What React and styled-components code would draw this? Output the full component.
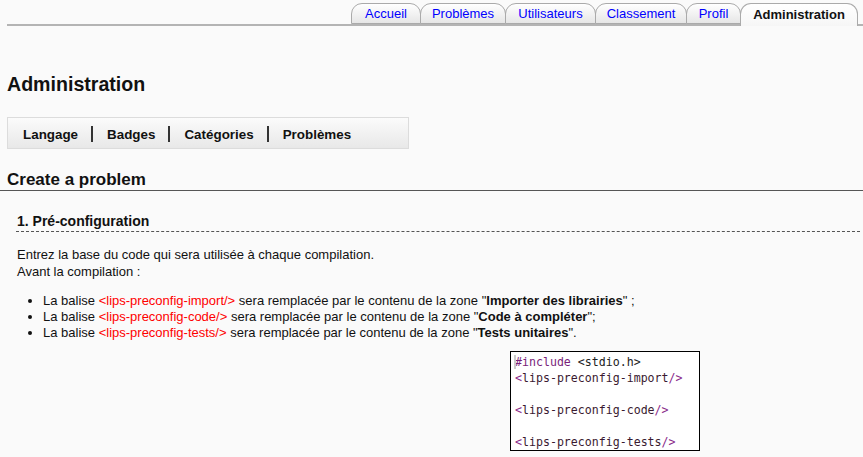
import React from "react";
import styled, { createGlobalStyle } from "styled-components";

const Global = createGlobalStyle`
  html, body { margin: 0; padding: 0; background: #fafafa; }
  body { font-family: "Liberation Sans", Arial, sans-serif; font-size: 13px; color: #111; }
`;

const Page = styled.div`
  width: 863px;
  min-height: 457px;
  box-sizing: border-box;
`;

const TabBar = styled.div`
  display: flex;
  justify-content: flex-end;
  align-items: flex-end;
  margin-left: 7px;
  padding-top: 3px;
  padding-right: 5px;
  border-bottom: 2px solid #b4b4b4;
  height: 21px;
`;

const Tab = styled.a`
  display: flex;
  align-items: center;
  justify-content: center;
  box-sizing: border-box;
  height: ${(p) => (p.$active ? "23px" : "21px")};
  margin-bottom: ${(p) => (p.$active ? "-2px" : "0")};
  padding-bottom: ${(p) => (p.$active ? "2px" : "0")};
  width: ${(p) => p.$w}px;
  border: 1px solid #aaa;
  border-bottom: ${(p) => (p.$active ? "none" : "1px solid #aaa")};
  border-radius: 11px 11px 0 0;
  background: ${(p) =>
    p.$active
      ? "linear-gradient(#ffffff, #f6f6f6)"
      : "linear-gradient(#ffffff, #e6e6e6)"};
  color: ${(p) => (p.$active ? "#111" : "#0000ff")};
  font-weight: ${(p) => (p.$active ? "bold" : "normal")};
  font-size: 13px;
  text-decoration: none;
  margin-left: -1px;
`;

const Content = styled.div`
  padding: 0;
`;

const Title = styled.h1`
  margin: 47px 0 0 7px;
  font-size: 19.6px;
  line-height: 23px;
  font-weight: bold;
  color: #111;
`;

const SubMenu = styled.div`
  display: flex;
  align-items: center;
  box-sizing: border-box;
  width: 402px;
  height: 32px;
  margin: 21px 0 0 7px;
  padding-left: 15px;
  border: 1px solid #dcdcdc;
  background: linear-gradient(#fbfbfb, #e8e8e8);
`;

const SubItem = styled.span`
  font-weight: bold;
  font-size: 13.4px;
  color: #111;
  padding-top: 2px;
`;

const Sep = styled.span`
  width: 2px;
  height: 16px;
  background: #333;
  margin: 2px 14px 0 13px;
`;

const SectionTitle = styled.h2`
  margin: 21px 0 0 0;
  padding: 0 0 0 7px;
  font-size: 17px;
  line-height: 20px;
  font-weight: bold;
  border-bottom: 1px solid #555;
`;

const Section = styled.div`
  padding: 0 3px 0 16px;
`;

const SubTitle = styled.h3`
  margin: 22px 0 0 0;
  padding: 0 0 2px 1px;
  font-size: 14px;
  line-height: 16px;
  font-weight: bold;
  border-bottom: 1px dashed #555;
`;

const Para = styled.p`
  margin: 14px 0 0 1px;
  line-height: 17px;
`;

const List = styled.ul`
  margin: 13px 0 0 0;
  padding-left: 27px;
  line-height: 16px;
`;

const Tag = styled.span`
  color: #ff0000;
`;

const CodeBox = styled.div`
  width: 190px;
  height: 100px;
  box-sizing: border-box;
  margin: 10px 0 0 494px;
  border: 1px solid #000;
  background: #fff;
  padding: 2px 0 0 4px;
  font-family: "DejaVu Sans Mono", "Liberation Mono", monospace;
  font-size: 11.6px;
  line-height: 16px;
  white-space: pre;
  color: #222;
  position: relative;
`;

const Line = styled.div`
  height: 16px;
`;

const Kw = styled.span`
  color: #7a1f7a;
`;

const Br = styled.span`
  color: #8a2a8a;
`;

const Name = styled.span`
  color: #3a1a30;
`;

const Caret = styled.span`
  position: absolute;
  left: 3px;
  top: 3px;
  width: 2px;
  height: 14px;
  background: #ccc;
`;

const tabs = [
  ["Accueil", 70],
  ["Problèmes", 86],
  ["Utilisateurs", 91],
  ["Classement", 92],
  ["Profil", 55],
];

function TagLine({ name }) {
  return (
    <Line>
      <Br>&lt;</Br>
      <Name>{name}</Name>
      <Br>/&gt;</Br>
    </Line>
  );
}

export default function App() {
  return (
    <Page>
      <Global />
      <TabBar>
        {tabs.map(([t, w]) => (
          <Tab key={t} href="#" $w={w}>
            {t}
          </Tab>
        ))}
        <Tab $active $w={118}>Administration</Tab>
      </TabBar>
      <Content>
        <Title>Administration</Title>
        <SubMenu>
          <SubItem>Langage</SubItem>
          <Sep />
          <SubItem>Badges</SubItem>
          <Sep />
          <SubItem>Catégories</SubItem>
          <Sep />
          <SubItem>Problèmes</SubItem>
        </SubMenu>
        <SectionTitle>Create a problem</SectionTitle>
        <Section>
          <SubTitle>1. Pré-configuration</SubTitle>
          <Para>
            Entrez la base du code qui sera utilisée à chaque compilation.
            <br />
            Avant la compilation :
          </Para>
          <List>
            <li>
              La balise <Tag>&lt;lips-preconfig-import/&gt;</Tag> sera remplacée
              par le contenu de la zone "<b>Importer des librairies</b>" ;
            </li>
            <li>
              La balise <Tag>&lt;lips-preconfig-code/&gt;</Tag> sera remplacée
              par le contenu de la zone "<b>Code à compléter</b>";
            </li>
            <li>
              La balise <Tag>&lt;lips-preconfig-tests/&gt;</Tag> sera remplacée
              par le contenu de la zone "<b>Tests unitaires</b>".
            </li>
          </List>
          <CodeBox>
            <Caret />
            <Line>
              <Kw>#include</Kw> &lt;stdio.h&gt;
            </Line>
            <TagLine name="lips-preconfig-import" />
            <Line />
            <TagLine name="lips-preconfig-code" />
            <Line />
            <TagLine name="lips-preconfig-tests" />
          </CodeBox>
        </Section>
      </Content>
    </Page>
  );
}
